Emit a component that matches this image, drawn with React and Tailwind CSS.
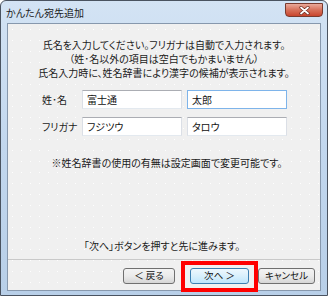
import React from 'react';

const jp = "font-['Noto_Sans_CJK_JP','Noto_Sans',sans-serif] [font-feature-settings:'palt']";

function TextBox({ value, focused }) {
  return (
    <div
      className={`w-[100px] h-[19px] bg-white border pl-[4px] pt-[1px] text-[10px] leading-[16px] text-[#111] ${
        focused ? 'border-[#7eb4ea]' : 'border-[#abadb3] border-l-[#dbdfe6] border-r-[#dbdfe6] border-b-[#e3e9ef]'
      }`}
    >
      {value}
    </div>
  );
}

function Button({ label, width, primary }) {
  return (
    <div
      className={`${width} h-[16px] rounded-[3px] border flex items-center justify-center text-[9.5px] leading-none text-[#111] ${
        primary
          ? 'border-[#3c7fb1] bg-gradient-to-b from-[#eef8fe] via-[#d9f0fc] to-[#bee6fd]'
          : 'border-[#707070] bg-gradient-to-b from-[#f3f3f3] via-[#ebebeb] to-[#d6d6d6]'
      }`}
    >
      {label}
    </div>
  );
}

export default function App() {
  return (
    <div className={`w-[328px] h-[296px] ${jp} text-[#1b1b1b]`}>
      <div className="w-full h-full flex flex-col border border-[#4a5360] rounded-t-[6px] bg-gradient-to-b from-[#d3e3f4] via-[#c2d7ee] to-[#b8cfe8]">
        {/* title bar */}
        <div className="h-[22px] flex justify-between pl-[5px] pr-[4px]">
          <span className="self-center text-[10px] leading-none pt-[1px]">かんたん宛先追加</span>
          <div className="w-[38px] h-[14px] mt-[2px] rounded-b-[4px] border border-[#7a3a2e] bg-gradient-to-b from-[#e9a99a] via-[#d7705a] to-[#c8442c] flex items-center justify-center">
            <svg width="11" height="9" viewBox="0 0 11 9">
              <path d="M2 1.5 L9 7.5 M9 1.5 L2 7.5" stroke="#6b2a20" strokeWidth="3.2" strokeLinecap="round" />
              <path d="M2 1.5 L9 7.5 M9 1.5 L2 7.5" stroke="#ffffff" strokeWidth="1.8" strokeLinecap="round" />
            </svg>
          </div>
        </div>

        {/* client area */}
        <div className="flex-1 mx-[6px] mb-[4px] border border-[#8798ad] bg-[#f0f0f0] bg-[radial-gradient(circle,rgba(255,255,255,0.95)_0.6px,transparent_0.9px)] bg-[length:9px_11px] flex flex-col pb-[6px]">
          <div className="pt-[14px] text-center text-[10px] leading-[14px]">
            <p>氏名を入力してください。フリガナは自動で入力されます。</p>
            <p>（姓･名以外の項目は空白でもかまいません）</p>
            <p>氏名入力時に、姓名辞書により漢字の候補が表示されます。</p>
          </div>

          <div className="mt-[10px] pl-[34px] flex flex-col gap-[8px]">
            <div className="flex items-center">
              <span className="w-[40px] text-[10px] leading-none">姓･名</span>
              <div className="flex gap-[5px]">
                <TextBox value="富士通" />
                <TextBox value="太郎" focused />
              </div>
            </div>
            <div className="flex items-center">
              <span className="w-[40px] text-[10px] leading-none">フリガナ</span>
              <div className="flex gap-[5px]">
                <TextBox value="フジツウ" />
                <TextBox value="タロウ" />
              </div>
            </div>
          </div>

          <p className="mt-[20px] text-center text-[10px] leading-[14px] pl-[6px]">
            ※姓名辞書の使用の有無は設定画面で変更可能です。
          </p>

          <div className="flex-1" />

          <p className="text-center text-[10px] leading-[14px] pr-[4px]">「次へ」ボタンを押すと先に進みます。</p>

          <div className="mt-[6px] h-px bg-[#c9c9c9]" />

          <div className="mt-[8px] flex justify-end pr-[5px]">
            <Button label="＜ 戻る" width="w-[52px]" />
            <div className="relative ml-[15px]">
              <Button label="次へ ＞" width="w-[59px]" primary />
              <div className="absolute -left-[9px] -top-[7px] -right-[9px] -bottom-[8px] border-4 border-[#f00]" />
            </div>
            <div className="ml-[9px]">
              <Button label="キャンセル" width="w-[57px]" />
            </div>
          </div>
        </div>
      </div>
    </div>
  );
}
